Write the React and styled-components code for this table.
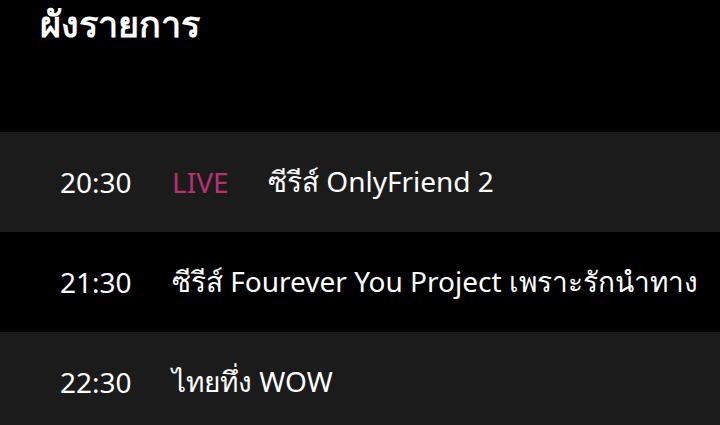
import React from 'react';
import styled, { createGlobalStyle } from 'styled-components';

const GlobalStyle = createGlobalStyle`
  html, body {
    margin: 0;
    padding: 0;
    background: #000000;
  }
  body {
    font-family: 'Noto Sans', 'Liberation Sans', sans-serif;
    color: #ffffff;
  }
`;

const Page = styled.div`
  width: 720px;
  height: 425px;
  overflow: hidden;
  background: #000000;
`;

const Header = styled.div`
  height: 132px;
  box-sizing: border-box;
  padding: 0 0 0 40px;
`;

const Title = styled.h1`
  margin: 0;
  font-size: 36px;
  font-weight: 700;
  line-height: 48px;
  color: #ffffff;
`;

const List = styled.div`
  display: flex;
  flex-direction: column;
`;

const Row = styled.div`
  display: flex;
  align-items: center;
  height: 100px;
  padding-left: 60px;
  background: ${(p) => (p.$shaded ? '#1b1b1b' : '#000000')};
  white-space: nowrap;
  font-size: 28px;
`;

const Time = styled.span`
  width: 112px;
  flex: none;
  color: #ffffff;
`;

const Live = styled.span`
  width: 96px;
  flex: none;
  color: #b8306e;
`;

const Show = styled.span`
  color: #ffffff;
`;

const schedule = [
  { time: '20:30', live: true, name: 'ซีรีส์ OnlyFriend 2' },
  { time: '21:30', live: false, name: 'ซีรีส์ Fourever You Project เพราะรักนำทาง' },
  { time: '22:30', live: false, name: 'ไทยทึ่ง WOW' },
];

const App = () => (
  <Page>
    <GlobalStyle />
    <Header>
      <Title>ผังรายการ</Title>
    </Header>
    <List>
      {schedule.map((item, i) => (
        <Row key={item.time} $shaded={i % 2 === 0}>
          <Time>{item.time}</Time>
          {item.live && <Live>LIVE</Live>}
          <Show>{item.name}</Show>
        </Row>
      ))}
    </List>
  </Page>
);

export default App;
